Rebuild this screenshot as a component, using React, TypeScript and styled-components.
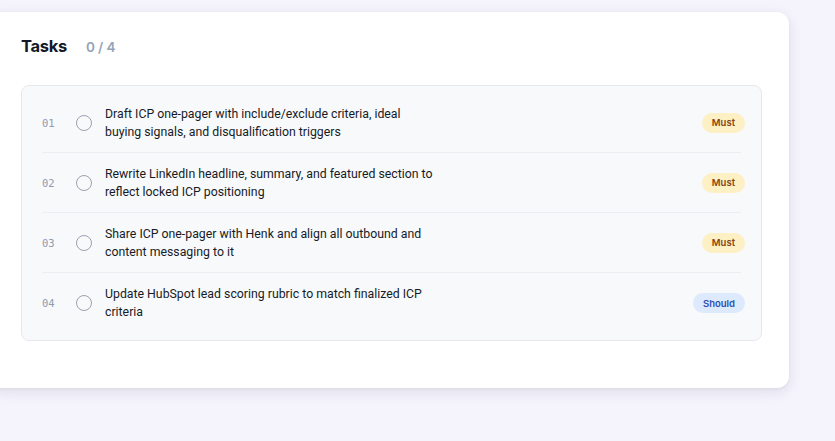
import styled, { createGlobalStyle } from "styled-components";

const GlobalStyle = createGlobalStyle`
  html, body {
    margin: 0;
    background: #f5f4fd;
    font-family: Inter, "Noto Sans", sans-serif;
  }
`;

/* styles */
const Page = styled.div`
  padding: 12px 46px 0 0;
  min-height: 429px;
`;

const Card = styled.section`
  margin-left: -12px;
  background: #ffffff;
  border-radius: 12px;
  box-shadow: 0 4px 14px rgba(30, 30, 60, 0.1), 0 1px 3px rgba(30, 30, 60, 0.06);
  padding: 23px 27px 47px 33px;
`;

const Header = styled.div`
  display: flex;
  align-items: baseline;
  gap: 19px;
  margin-bottom: 28px;
`;

const Title = styled.h2`
  margin: 0;
  font-size: 16.5px;
  font-weight: 700;
  letter-spacing: -0.3px;
  color: #111827;
  line-height: 22px;
`;

const Count = styled.span`
  font-size: 13.5px;
  font-weight: 600;
  letter-spacing: -0.1px;
  color: #94a3b8;
`;

const List = styled.div`
  background: #f8f9fb;
  border: 1px solid #e6e8ee;
  border-radius: 8px;
  padding: 7px 20px;
`;

const Row = styled.div`
  box-sizing: border-box;
  display: flex;
  align-items: center;
  height: 60px;
  border-bottom: 1px solid #eceef2;
  &:last-child {
    border-bottom: none;
  }
`;

const Num = styled.span`
  width: 34px;
  flex-shrink: 0;
  font-family: "DejaVu Sans Mono", monospace;
  font-size: 10.5px;
  color: #8e9bb0;
`;

const Check = styled.span`
  width: 16px;
  height: 16px;
  flex-shrink: 0;
  box-sizing: border-box;
  border: 1.5px solid #9ca3af;
  border-radius: 50%;
  margin-right: 13px;
`;

const Text = styled.p`
  margin: 0;
  flex: 1;
  max-width: 332px;
  font-family: Roboto, Inter, sans-serif;
  font-size: 12.3px;
  line-height: 18px;
  color: #161b26;
`;

const Badge = styled.span<{ $tone: "must" | "should" }>`
  margin-left: auto;
  margin-right: -4px;
  height: 20px;
  display: inline-flex;
  align-items: center;
  padding: 0 10px;
  border-radius: 10px;
  font-size: 9.5px;
  font-weight: 600;
  background: ${(p) => (p.$tone === "must" ? "#fdf0c4" : "#dde9fc")};
  color: ${(p) => (p.$tone === "must" ? "#8a4510" : "#2a4fb0")};
`;

const tasks = [
  {
    id: "01",
    text: "Draft ICP one-pager with include/exclude criteria, ideal buying signals, and disqualification triggers",
    tone: "must" as const,
  },
  {
    id: "02",
    text: "Rewrite LinkedIn headline, summary, and featured section to reflect locked ICP positioning",
    tone: "must" as const,
  },
  {
    id: "03",
    text: "Share ICP one-pager with Henk and align all outbound and content messaging to it",
    tone: "must" as const,
  },
  {
    id: "04",
    text: "Update HubSpot lead scoring rubric to match finalized ICP criteria",
    tone: "should" as const,
  },
];

export default function App() {
  return (
    <Page>
      <GlobalStyle />
      <Card>
        <Header>
          <Title>Tasks</Title>
          <Count>0 / 4</Count>
        </Header>

        <List>
          {tasks.map((t) => (
            <Row key={t.id}>
              <Num>{t.id}</Num>
              <Check />
              <Text>{t.text}</Text>
              <Badge $tone={t.tone}>{t.tone === "must" ? "Must" : "Should"}</Badge>
            </Row>
          ))}
        </List>
      </Card>
    </Page>
  );
}
